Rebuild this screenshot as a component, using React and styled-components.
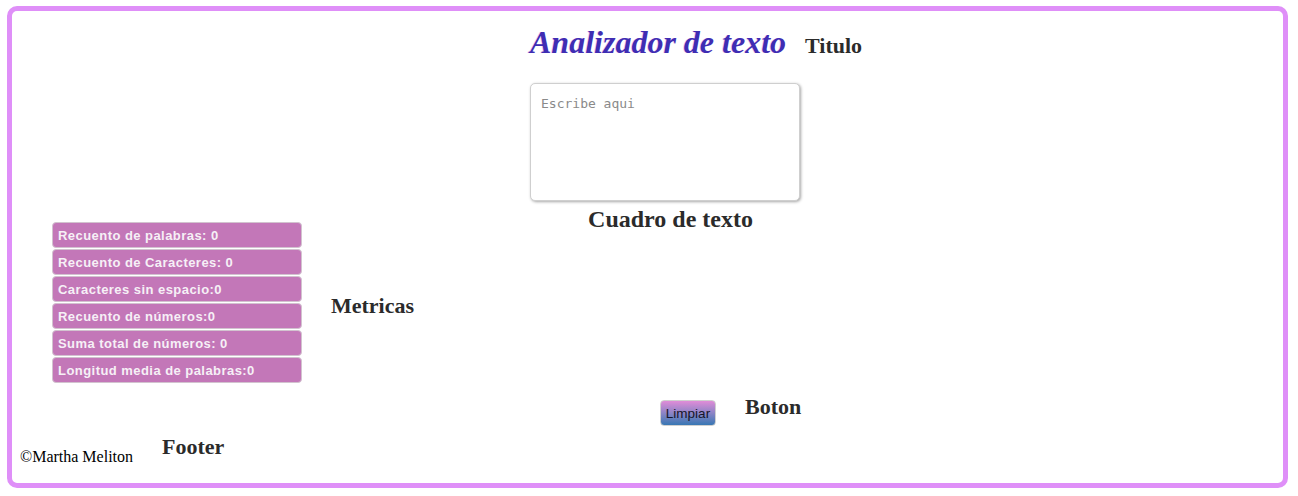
import React, { useState } from 'react';
import styled, { createGlobalStyle } from 'styled-components';

const GlobalStyle = createGlobalStyle`
  html, body {
    margin: 0;
    padding: 0;
    background: #ffffff;
    font-family: "Liberation Serif", "Times New Roman", serif;
  }
`;

const Frame = styled.div`
  box-sizing: border-box;
  width: 1281px;
  height: 482px;
  margin: 6px 0 0 7px;
  border: 5px solid #df8ff8;
  border-radius: 10px;
  display: flex;
  flex-direction: column;
`;

// small bold tags that name each part of the page
const Tag = styled.span`
  font-family: "Liberation Serif", "Times New Roman", serif;
  font-weight: 700;
  font-size: ${(p) => p.$size || 22}px;
  color: #2b2b2b;
  white-space: nowrap;
`;

const Header = styled.header`
  display: flex;
  align-items: baseline;
  gap: 19px;
  padding: 13px 0 0 518px;
`;

const Title = styled.h1`
  margin: 0;
  font-family: "Liberation Serif", "Times New Roman", serif;
  font-style: italic;
  font-weight: 700;
  font-size: 32px;
  color: #3f2db3;
  text-shadow: -1px 0 0 rgba(214, 120, 220, 0.3);
`;

const TextBox = styled.textarea`
  box-sizing: border-box;
  width: 270px;
  height: 118px;
  margin: 22px 0 0 518px;
  padding: 12px 10px;
  resize: none;
  border: 1px solid #cfcfcf;
  border-radius: 5px;
  box-shadow: 1px 1px 3px rgba(0, 0, 0, 0.35);
  font-family: "DejaVu Sans Mono", monospace;
  font-size: 13px;
  outline: none;

  &::placeholder {
    color: #8a8a8a;
  }
`;

const Middle = styled.section`
  display: flex;
  align-items: flex-start;
  padding-top: 5px;
`;

const MetricsGroup = styled.div`
  display: flex;
  align-items: center;
  gap: 29px;
  margin: 16px 0 0 40px;
`;

const MetricList = styled.ul`
  list-style: none;
  margin: 0;
  padding: 0;
  display: flex;
  flex-direction: column;
  gap: 1px;
`;

const Metric = styled.li`
  box-sizing: border-box;
  width: 250px;
  height: 26px;
  padding: 0 5px;
  display: flex;
  align-items: center;
  background: #c377b8;
  border: 1px solid #d2c3cf;
  border-radius: 4px;
  color: #f6f0f6;
  font-family: "Liberation Sans", Arial, sans-serif;
  font-weight: 700;
  font-size: 13px;
  letter-spacing: 0.45px;
`;

const GroupCaption = styled(Tag)`
  margin-top: 7px;
`;

const BoxCaption = styled(Tag)`
  margin-left: 174px;
`;

const Actions = styled.div`
  display: flex;
  align-items: flex-start;
  gap: 29px;
  padding: 11px 0 0 648px;
`;

const ClearButton = styled.button`
  box-sizing: border-box;
  width: 56px;
  height: 26px;
  margin-top: 6px;
  padding: 0;
  border: 1px solid #d0d0d0;
  border-radius: 4px;
  background: linear-gradient(to bottom, #e08cd8 0%, #8c84c6 50%, #3877b4 100%);
  color: #15152a;
  font-family: "Liberation Sans", Arial, sans-serif;
  font-size: 13.5px;
  cursor: pointer;
`;

const Footer = styled.footer`
  display: flex;
  align-items: flex-start;
  gap: 29px;
  padding: 8px 0 0 8px;
`;

const Credit = styled.p`
  margin: 14px 0 0;
  font-family: "Liberation Serif", "Times New Roman", serif;
  font-size: 16px;
  color: #000000;
`;

export default function App() {
  const [text, setText] = useState('');

  const words = text.trim() ? text.trim().split(/\s+/) : [];
  const numbers = text.match(/\d+/g) || [];
  const sum = numbers.reduce((acc, n) => acc + Number(n), 0);
  const avg = words.length
    ? +(words.join('').length / words.length).toFixed(2)
    : 0;

  const metrics = [
    `Recuento de palabras: ${words.length}`,
    `Recuento de Caracteres: ${text.length}`,
    `Caracteres sin espacio:${text.replace(/\s/g, '').length}`,
    `Recuento de números:${numbers.length}`,
    `Suma total de números: ${sum}`,
    `Longitud media de palabras:${avg}`,
  ];

  return (
    <>
      <GlobalStyle />
      <Frame>
        <Header>
          <Title>Analizador de texto</Title>
          <Tag>Titulo</Tag>
        </Header>

        <TextBox
          placeholder="Escribe aqui"
          value={text}
          onChange={(e) => setText(e.target.value)}
        />

        <Middle>
          <MetricsGroup>
            <MetricList>
              {metrics.map((m) => (
                <Metric key={m}>{m}</Metric>
              ))}
            </MetricList>
            <GroupCaption>Metricas</GroupCaption>
          </MetricsGroup>
          <BoxCaption $size={24}>Cuadro de texto</BoxCaption>
        </Middle>

        <Actions>
          <ClearButton onClick={() => setText('')}>Limpiar</ClearButton>
          <Tag>Boton</Tag>
        </Actions>

        <Footer>
          <Credit>©Martha Meliton</Credit>
          <Tag>Footer</Tag>
        </Footer>
      </Frame>
    </>
  );
}
